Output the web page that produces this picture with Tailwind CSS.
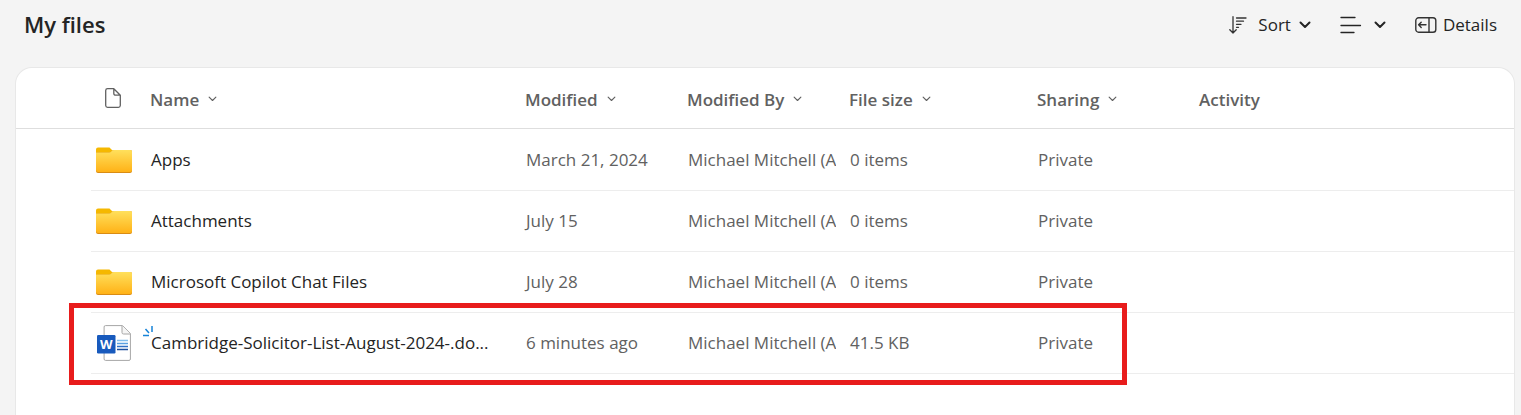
<!DOCTYPE html>
<html lang="en">
<head>
    <meta charset="UTF-8">
    <meta name="viewport" content="width=device-width, initial-scale=1.0">
    <title>My files</title>
    <script src="https://cdn.jsdelivr.net/npm/@tailwindcss/browser@4"></script>
</head>
<body class="bg-[#f4f4f4] font-['Segoe_UI','Open_Sans',sans-serif] text-[17px] leading-6 text-[#242424] min-h-screen flex flex-col overflow-hidden">
    <!-- shared shapes -->
    <svg class="absolute w-0 h-0" aria-hidden="true">
        <defs>
            <linearGradient id="folderFill" x1="0" y1="0" x2="0" y2="1">
                <stop offset="0" stop-color="#ffe05c"/>
                <stop offset="1" stop-color="#ffb217"/>
            </linearGradient>
        </defs>
        <symbol id="folder" viewBox="0 0 36 26">
            <path d="M0 2.500A2 2 0 0 1 2 .5H13.500L17 4 13 7H0z" fill="#f5b800"/>
            <path d="M0 5.500H13Q14.500 5.500 15.500 4.300T18 3H34.500A1.500 1.500 0 0 1 36 4.500V24A2 2 0 0 1 34 26H2A2 2 0 0 1 0 24z" fill="#d98c14"/>
            <path d="M0 5.500H13Q14.500 5.500 15.500 4.300T18 3H34.500A1.500 1.500 0 0 1 36 4.500V23A2 2 0 0 1 34 25H2A2 2 0 0 1 0 23z" fill="url(#folderFill)"/>
        </symbol>
        <symbol id="chevron" viewBox="0 0 12 8">
            <path d="M1.500 1.500 6 6l4.500-4.500" fill="none" stroke="currentColor" stroke-linecap="round" stroke-linejoin="round"/>
        </symbol>
    </svg>

    <header class="flex items-center justify-between h-[68px] pb-[18px] pl-6 pr-6">
        <h1 class="text-[22px] font-semibold pb-0.5">My files</h1>
        <div class="flex items-center">
            <button class="flex items-center mr-[29px]">
                <svg class="w-[18px] h-[18px] mr-[11px]" viewBox="0 0 18 18" fill="none" stroke="#333" stroke-width="1.300" stroke-linecap="round" stroke-linejoin="round">
                    <path d="M4 .7V17M.8 13.800 4 17l3.200-3.200M7.500 2H17M7.500 5.200h7M7.500 8.300h4.500M7.500 11.300h2"/>
                </svg>
                Sort
                <svg class="w-3 h-2 ml-2 stroke-2"><use href="#chevron"/></svg>
            </button>
            <button class="flex items-center mr-[29px]" aria-label="View options">
                <svg class="w-[22px] h-[18px] mr-3" viewBox="0 0 22 18" fill="none" stroke="#242424" stroke-width="1.300" stroke-linecap="round">
                    <path d="M1 1.500H15M1 9.500H20.500M1 16.500H14"/>
                </svg>
                <svg class="w-3 h-2 stroke-2"><use href="#chevron"/></svg>
            </button>
            <button class="flex items-center">
                <svg class="w-[22px] h-4 mr-1.5" viewBox="0 0 22 16" fill="none" stroke="#333" stroke-width="1.400" stroke-linecap="round" stroke-linejoin="round">
                    <rect x=".8" y=".8" width="20" height="14.400" rx="2.800"/>
                    <path d="M14 1V15M3.800 7.800H11M6.200 5.200 3.600 7.800 6.200 10.400"/>
                </svg>
                Details
            </button>
        </div>
    </header>

    <main class="relative flex-1 bg-white rounded-t-2xl ml-4 mr-[7px] ring-1 ring-[#e8e8e8]">
        <table class="w-full table-fixed border-separate border-spacing-0 text-left whitespace-nowrap text-[#616161]">
            <colgroup>
                <col class="w-[75px]">
                <col class="w-[59px]">
                <col class="w-[375px]">
                <col class="w-[162px]">
                <col class="w-[162px]">
                <col class="w-[188px]">
                <col class="w-[162px]">
                <col>
            </colgroup>
            <thead>
                <tr class="h-[61px] *:px-0 *:pt-[3px] *:pb-0 *:border-b *:border-[#dedede] *:font-semibold">
                    <td></td>
                    <th class="pt-0! pl-[14px]!">
                        <svg class="w-4 h-5" role="img" aria-label="File type" viewBox="0 0 16 20" fill="none" stroke="#616161" stroke-width="1.300" stroke-linejoin="round">
                            <path d="M2.600.7H8.800L15.300 7.200V17.500A1.900 1.900 0 0 1 13.400 19.300H2.600A1.900 1.900 0 0 1 .7 17.500V2.500A1.900 1.900 0 0 1 2.600.7zM8.800.7V5.500A1.700 1.700 0 0 0 10.500 7.200H15.300"/>
                        </svg>
                    </th>
                    <th><button class="flex items-center">Name <svg class="w-[9px] h-1.5 ml-[9px] mb-0.5 stroke-[1.5]"><use href="#chevron"/></svg></button></th>
                    <th><button class="flex items-center">Modified <svg class="w-[9px] h-1.5 ml-[9px] mb-0.5 stroke-[1.5]"><use href="#chevron"/></svg></button></th>
                    <th><button class="flex items-center">Modified By <svg class="w-[9px] h-1.5 ml-[9px] mb-0.5 stroke-[1.5]"><use href="#chevron"/></svg></button></th>
                    <th><button class="flex items-center">File size <svg class="w-[9px] h-1.5 ml-[9px] mb-0.5 stroke-[1.5]"><use href="#chevron"/></svg></button></th>
                    <th><button class="flex items-center">Sharing <svg class="w-[9px] h-1.5 ml-[9px] mb-0.5 stroke-[1.5]"><use href="#chevron"/></svg></button></th>
                    <th>Activity</th>
                </tr>
            </thead>
            <tbody>
                <tr class="h-[62px] *:py-0 *:px-px *:border-[#ededed] *:not-first:border-b">
                    <td></td>
                    <td class="pl-[5px]!"><svg class="w-9 h-[26px]"><use href="#folder"/></svg></td>
                    <td><a href="#" class="text-[#242424]">Apps</a></td>
                    <td>March 21, 2024</td>
                    <td><div class="w-[148px] overflow-hidden">Michael Mitchell (A</div></td>
                    <td>0 items</td>
                    <td>Private</td>
                    <td></td>
                </tr>
                <tr class="h-[61px] *:py-0 *:px-px *:border-[#ededed] *:not-first:border-b">
                    <td></td>
                    <td class="pl-[5px]!"><svg class="w-9 h-[26px]"><use href="#folder"/></svg></td>
                    <td><a href="#" class="text-[#242424]">Attachments</a></td>
                    <td>July 15</td>
                    <td><div class="w-[148px] overflow-hidden">Michael Mitchell (A</div></td>
                    <td>0 items</td>
                    <td>Private</td>
                    <td></td>
                </tr>
                <tr class="h-[61px] *:py-0 *:px-px *:border-[#ededed] *:not-first:border-b">
                    <td></td>
                    <td class="pl-[5px]!"><svg class="w-9 h-[26px]"><use href="#folder"/></svg></td>
                    <td><a href="#" class="text-[#242424]">Microsoft Copilot Chat Files</a></td>
                    <td>July 28</td>
                    <td><div class="w-[148px] overflow-hidden">Michael Mitchell (A</div></td>
                    <td>0 items</td>
                    <td>Private</td>
                    <td></td>
                </tr>
                <tr class="h-[61px] *:py-0 *:px-px *:border-[#ededed] *:not-first:border-b">
                    <td></td>
                    <td class="pl-[6px]!">
                        <svg class="w-[34px] h-9" viewBox="0 0 34 36">
                            <path d="M8.500.6H25.500L33.400 8.500V34A1.400 1.400 0 0 1 32 35.400H8.500A1.400 1.400 0 0 1 7.100 34V2A1.400 1.400 0 0 1 8.500.6z" fill="#fff" stroke="#a6a6a6"/>
                            <path d="M25 .8V7.500A1.500 1.500 0 0 0 26.500 9H33.200" fill="#f5f5f5" stroke="#a6a6a6"/>
                            <path d="M20 15.500H31" stroke="#83beec" stroke-width="1.500"/>
                            <path d="M20 18.500H31" stroke="#5aa0e2" stroke-width="1.500"/>
                            <path d="M20 21.500H31" stroke="#2f6fc4" stroke-width="1.500"/>
                            <path d="M20 24.500H31" stroke="#1d4f9c" stroke-width="1.500"/>
                            <rect y="10" width="18.500" height="18.500" rx="1.200" fill="#185abd"/>
                            <text x="9.200" y="24" text-anchor="middle" font-family="Open Sans" font-weight="700" font-size="13" fill="#fff">W</text>
                        </svg>
                    </td>
                    <td class="relative">
                        <svg class="absolute -left-2 top-3 w-3 h-3" viewBox="0 0 12 12" fill="none" stroke="#1683d8" stroke-width="1.500">
                            <path d="M10 1V7M3.500 4 7 8M1 10.500H7"/>
                        </svg>
                        <a href="#" class="text-[#242424]">Cambridge-Solicitor-List-August-2024-.do...</a>
                    </td>
                    <td>6 minutes ago</td>
                    <td><div class="w-[148px] overflow-hidden">Michael Mitchell (A</div></td>
                    <td>41.5 KB</td>
                    <td>Private</td>
                    <td></td>
                </tr>
            </tbody>
        </table>
        <!-- highlight around the uploaded file -->
        <div class="absolute left-[53px] right-[387px] top-[235px] h-[82px] border-5 border-[#e81c1c] pointer-events-none"></div>
    </main>
</body>
</html>
